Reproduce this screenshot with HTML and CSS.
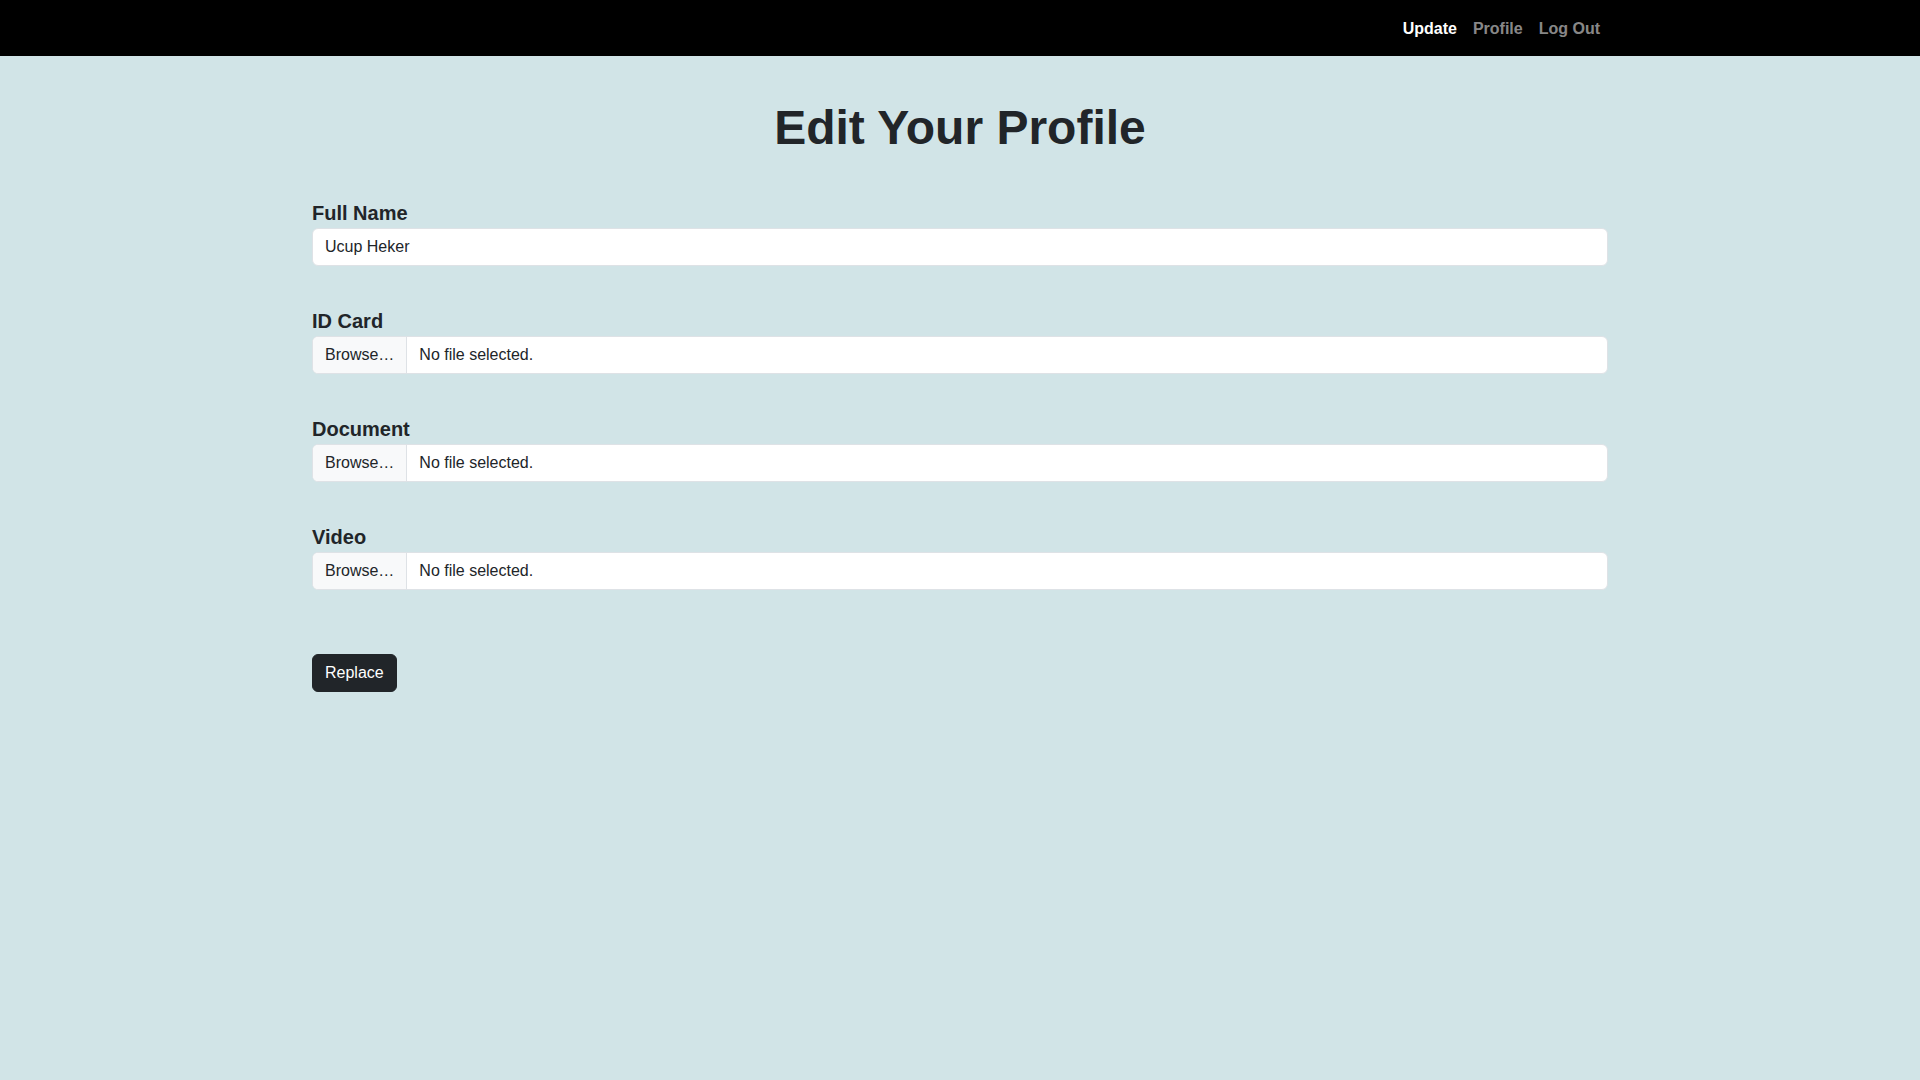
FILE: index.html
```html
<!DOCTYPE html>
<html lang="en">
<head>
<meta charset="utf-8">
<title>Edit Your Profile</title>
<link rel="stylesheet" href="styles.css">
</head>
<body>
<nav class="navbar">
  <div class="nav-inner">
    <a class="nav-link active" href="#">Update</a>
    <a class="nav-link" href="#">Profile</a>
    <a class="nav-link" href="#">Log Out</a>
  </div>
</nav>
<main class="container">
  <h1 class="title">Edit Your Profile</h1>
  <form class="form">
    <div class="field">
      <label class="field-label">Full Name</label>
      <input class="text-input" type="text" value="Ucup Heker">
    </div>
    <div class="field">
      <label class="field-label">ID Card</label>
      <div class="file-input"><span class="file-btn">Browse…</span><span class="file-name">No file selected.</span></div>
    </div>
    <div class="field">
      <label class="field-label">Document</label>
      <div class="file-input"><span class="file-btn">Browse…</span><span class="file-name">No file selected.</span></div>
    </div>
    <div class="field">
      <label class="field-label">Video</label>
      <div class="file-input"><span class="file-btn">Browse…</span><span class="file-name">No file selected.</span></div>
    </div>
    <div class="actions">
      <button type="button" class="btn-dark">Replace</button>
    </div>
  </form>
</main>
</body>
</html>
```
FILE: styles.css
```css
* { box-sizing: border-box; }
html, body {
  margin: 0;
  padding: 0;
}
body {
  background: #d1e4e7;
  font-family: "Liberation Sans", Arial, sans-serif;
  font-size: 16px;
  line-height: 1.5;
  color: #212529;
  min-height: 1080px;
}
.navbar {
  background: #000;
  height: 56px;
}
.nav-inner {
  width: 1296px;
  height: 56px;
  margin: 0 auto;
  padding-top: 2px;
  display: flex;
  justify-content: flex-end;
  align-items: center;
}
.nav-link {
  padding: 0 8px;
  font-weight: bold;
  font-size: 16px;
  line-height: 24px;
  color: rgba(255, 255, 255, 0.55);
  text-decoration: none;
}
.nav-link.active { color: #fff; }
.container {
  width: 1296px;
  margin: 0 auto;
  padding-top: 43px;
}
.title {
  margin: 0 0 41px;
  font-size: 48px;
  line-height: 1.2;
  font-weight: bold;
  text-align: center;
  color: #212529;
}
.form {
  display: flex;
  flex-direction: column;
  gap: 40px;
}
.field {
  display: flex;
  flex-direction: column;
}
.field-label {
  font-size: 20px;
  font-weight: bold;
  line-height: 30px;
}
.text-input {
  height: 38px;
  width: 100%;
  padding: 6px 12px;
  border: 1px solid #dee2e6;
  border-radius: 6px;
  background: #fff;
  font-family: inherit;
  font-size: 16px;
  line-height: 24px;
  color: #212529;
  outline: none;
}
.file-input {
  height: 38px;
  display: flex;
  border: 1px solid #dee2e6;
  border-radius: 6px;
  background: #fff;
  overflow: hidden;
}
.file-btn {
  padding: 6px 12px;
  background: #f8f9fa;
  border-right: 1px solid #dee2e6;
  line-height: 24px;
  color: #212529;
}
.file-name {
  padding: 6px 12px;
  line-height: 24px;
  color: #212529;
}
.actions {
  padding-top: 24px;
}
.btn-dark {
  background: #212529;
  color: #fff;
  border: 1px solid #212529;
  border-radius: 6px;
  padding: 6px 12px;
  font-family: inherit;
  font-size: 16px;
  line-height: 24px;
  cursor: pointer;
}
```
